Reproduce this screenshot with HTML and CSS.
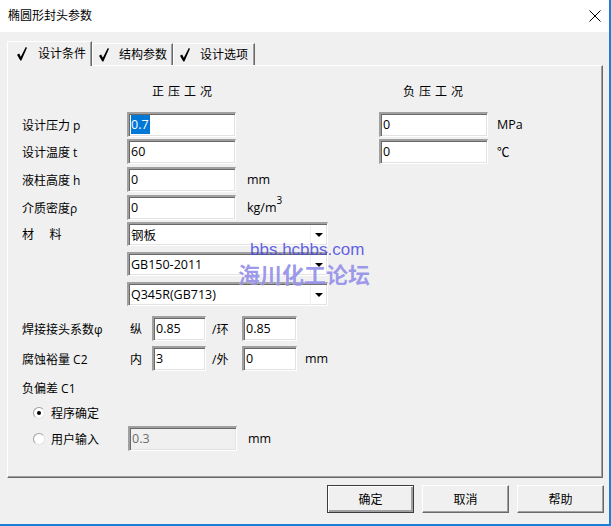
FILE: index.html
```html
<!DOCTYPE html>
<html lang="zh-CN">
<head>
  <meta charset="UTF-8">
  <title>椭圆形封头参数</title>
  <link rel="stylesheet" href="styles.css">
</head>
<body>
  <div class="window">
    <div class="titlebar">
      <span class="title">椭圆形封头参数</span>
      <svg class="close" width="12" height="12" viewBox="0 0 12 12"><path d="M0.5 0.5 L11.5 11.5 M11.5 0.5 L0.5 11.5" stroke="#000" stroke-width="1" fill="none"/></svg>
    </div>

    <div class="tabs">
      <div class="tab tab-1 active">
        <svg class="check" width="10" height="14" viewBox="0 0 10 14"><path d="M0 7.8 L2.2 6.4 L3.8 9.8 L8.8 0 L10 0.7 L4.4 13.6 L3.3 13.6 Z" fill="#000"/></svg>
        <span>设计条件</span>
      </div>
      <div class="tab tab-2">
        <svg class="check" width="10" height="14" viewBox="0 0 10 14"><path d="M0 7.8 L2.2 6.4 L3.8 9.8 L8.8 0 L10 0.7 L4.4 13.6 L3.3 13.6 Z" fill="#000"/></svg>
        <span>结构参数</span>
      </div>
      <div class="tab tab-3">
        <svg class="check" width="10" height="14" viewBox="0 0 10 14"><path d="M0 7.8 L2.2 6.4 L3.8 9.8 L8.8 0 L10 0.7 L4.4 13.6 L3.3 13.6 Z" fill="#000"/></svg>
        <span>设计选项</span>
      </div>
    </div>

    <div class="panel">
      <div class="row head">
        <span class="head-pos">正压工况</span>
        <span class="head-neg">负压工况</span>
      </div>

      <div class="row r1">
        <span class="label">设计压力 p</span>
        <div class="field"><span class="sel">0.7</span></div>
        <div class="field field-right">0</div>
        <span class="unit-right">MPa</span>
      </div>
      <div class="row r2">
        <span class="label">设计温度 t</span>
        <div class="field">60</div>
        <div class="field field-right">0</div>
        <span class="unit-right">℃</span>
      </div>
      <div class="row r3">
        <span class="label">液柱高度 h</span>
        <div class="field">0</div>
        <span class="unit">mm</span>
      </div>
      <div class="row r3">
        <span class="label">介质密度ρ</span>
        <div class="field">0</div>
        <span class="unit">kg/m<sup>3</sup></span>
      </div>

      <div class="row combo-row c1">
        <span class="label">材&nbsp;&nbsp;&nbsp;&nbsp;&nbsp;料</span>
        <div class="combo"><span class="combo-text">钢板</span><span class="drop"></span></div>
      </div>
      <div class="row combo-row c2">
        <span class="label"></span>
        <div class="combo"><span class="combo-text">GB150-2011</span><span class="drop"></span></div>
      </div>
      <div class="row combo-row c2">
        <span class="label"></span>
        <div class="combo"><span class="combo-text">Q345R(GB713)</span><span class="drop"></span></div>
      </div>

      <div class="row w1">
        <span class="label-w">焊接接头系数φ</span>
        <span class="pre">纵</span>
        <div class="field small">0.85</div>
        <span class="mid">/环</span>
        <div class="field small2">0.85</div>
      </div>
      <div class="row w2">
        <span class="label-w">腐蚀裕量 C2</span>
        <span class="pre">内</span>
        <div class="field small">3</div>
        <span class="mid">/外</span>
        <div class="field small2">0</div>
        <span class="unit-w">mm</span>
      </div>

      <div class="row text-row neg">负偏差 C1</div>
      <div class="row text-row opt1">
        <span class="radio checked"></span>
        <span class="radio-label">程序确定</span>
      </div>
      <div class="row opt2">
        <span class="radio"></span>
        <span class="radio-label wide">用户输入</span>
        <div class="field disabled">0.3</div>
        <span class="unit">mm</span>
      </div>
    </div>

    <div class="buttons">
      <div class="btn default">确定</div>
      <div class="btn">取消</div>
      <div class="btn">帮助</div>
    </div>

    <div class="watermark">
      <div class="wm-url">bbs.hcbbs.com</div>
      <div class="wm-name">海川化工论坛</div>
    </div>
  </div>
</body>
</html>
```

FILE: styles.css
```css
* {
  margin: 0;
  padding: 0;
  box-sizing: border-box;
}
body {
  background: #f0f0f0;
  font-family: 'Open Sans', 'Noto Sans CJK SC', sans-serif;
  font-size: 12px;
  color: #000;
  overflow: hidden;
}
.window {
  position: relative;
  width: 611px;
  height: 526px;
  background: #f0f0f0;
  border-right: 2px solid #1a7fd6;
  border-bottom: 2px solid #1a7fd6;
}
.titlebar {
  height: 32px;
  background: #fff;
  display: flex;
  align-items: center;
  justify-content: space-between;
  padding: 0 8px 0 8px;
}
.title {
  line-height: 16px;
}
.close {
  display: block;
}

/* tabs */
.tabs {
  margin-top: 9px;
  height: 24px;
  padding-left: 7px;
  display: flex;
  align-items: flex-end;
}
.tab {
  height: 22px;
  display: flex;
  align-items: center;
  background: #f0f0f0;
  border-top: 1px solid #fff;
  border-left: 1px solid #fff;
  border-right: 1px solid #696969;
  box-shadow: inset -1px 0 0 #a0a0a0;
  padding-left: 6px;
  line-height: 14px;
}
.tab .check {
  display: block;
  margin-right: 10px;
  flex-shrink: 0;
}
.tab-1 { width: 85px; }
.tab-2 { width: 81px; }
.tab-3 { width: 82px; }
.tab.active {
  height: 25px;
  margin-bottom: -1px;
  position: relative;
  z-index: 1;
  padding-left: 9px;
}
.tab.active .check {
  margin-right: 11px;
}

/* panel */
.panel {
  margin-left: 7px;
  width: 596px;
  height: 413px;
  border-top: 1px solid #fff;
  border-left: 1px solid #fff;
  border-right: 1px solid #696969;
  border-bottom: 1px solid #696969;
  box-shadow: inset -1px -1px 0 #a0a0a0;
  padding-left: 14px;
}
.row {
  display: flex;
  align-items: center;
  height: 25px;
}
.head {
  margin-top: 16px;
  height: 18px;
  letter-spacing: 4px;
}
.head-pos {
  margin-left: 130px;
  width: 64px;
}
.head-neg {
  margin-left: 187px;
}
.r1 { margin-top: 12px; }
.r2 { margin-top: 2px; }
.r3 { margin-top: 3px; }
.label {
  width: 105px;
  flex-shrink: 0;
}
.field {
  width: 109px;
  height: 25px;
  background: #fff;
  border-style: solid;
  border-width: 2px 1px 1px 2px;
  border-color: #a0a0a0 #fff #fff #a0a0a0;
  box-shadow: inset 1px 1px 0 #696969, inset -1px -1px 0 #e3e3e3;
  padding: 1px 0 0 2px;
  line-height: 19px;
  font-size: 12.5px;
  flex-shrink: 0;
}
.sel {
  background: #0078d7;
  color: #fff;
  display: inline-block;
  padding-right: 1px;
}
.field-right {
  margin-left: 143px;
}
.unit-right {
  margin-left: 9px;
  font-size: 12.5px;
}
.unit {
  margin-left: 11px;
  font-size: 12.5px;
}
.unit sup {
  font-size: 10px;
  vertical-align: 8px;
  line-height: 0;
}

/* combo boxes */
.combo-row {
  height: 24px;
}
.c1 { margin-top: 2px; }
.c2 { margin-top: 6px; }
.combo {
  width: 201px;
  height: 24px;
  background: #fff;
  display: flex;
  align-items: center;
  border-style: solid;
  border-width: 2px 1px 1px 2px;
  border-color: #a0a0a0 #fff #fff #a0a0a0;
  box-shadow: inset 1px 1px 0 #696969, inset -1px -1px 0 #e3e3e3;
}
.combo-text {
  flex: 1;
  padding-left: 2px;
  font-size: 12.5px;
}
.drop {
  width: 16px;
  height: 20px;
  margin-right: 1px;
  border-left: 1px solid #f0f0f0;
  display: flex;
  align-items: center;
  justify-content: center;
}
.drop::before {
  content: '';
  border-left: 4px solid transparent;
  border-right: 4px solid transparent;
  border-top: 4px solid #000;
}

/* welding / corrosion */
.w1 { margin-top: 10px; }
.w2 { margin-top: 5px; }
.label-w {
  width: 108px;
  flex-shrink: 0;
}
.pre {
  width: 22px;
}
.field.small { width: 54px; }
.field.small2 { width: 55px; }
.mid {
  margin-left: 6px;
  width: 30px;
}
.unit-w {
  margin-left: 8px;
  font-size: 12.5px;
}

.text-row {
  height: 18px;
}
.neg { margin-top: 8px; }
.opt1 { margin-top: 7px; }
.opt2 { margin-top: 4px; }
.radio {
  width: 12px;
  height: 12px;
  margin-left: 11px;
  border-radius: 50%;
  background: #fff;
  border: 1px solid;
  border-color: #a0a0a0 #e3e3e3 #e3e3e3 #a0a0a0;
  display: flex;
  align-items: center;
  justify-content: center;
  flex-shrink: 0;
}
.radio.checked::before {
  content: '';
  width: 4px;
  height: 4px;
  border-radius: 50%;
  background: #000;
}
.radio-label {
  margin-left: 6px;
}
.radio-label.wide {
  width: 77px;
}
.field.disabled {
  background: #f0f0f0;
  color: #6d6d6d;
}

/* buttons */
.buttons {
  margin-top: 7px;
  display: flex;
  justify-content: flex-end;
  gap: 8px;
  padding-right: 5px;
}
.btn {
  width: 87px;
  height: 28px;
  display: flex;
  align-items: center;
  justify-content: center;
  background: #f0f0f0;
  border-style: solid;
  border-width: 1px;
  border-color: #fff #696969 #696969 #fff;
  box-shadow: inset -1px -1px 0 #a0a0a0;
}
.btn.default {
  border-color: #3c3c3c;
  box-shadow: inset 1px 1px 0 #fff, inset -2px -2px 0 #a0a0a0;
}

/* forum watermark over the form */
.watermark {
  position: absolute;
  left: 238px;
  top: 240px;
  pointer-events: none;
}
.wm-url {
  margin-left: 12px;
  font-family: 'Liberation Sans', sans-serif;
  font-size: 17px;
  line-height: 20px;
  color: rgba(70, 70, 225, 0.85);
}
.wm-name {
  font-family: 'Noto Sans CJK SC', sans-serif;
  font-weight: bold;
  font-size: 22px;
  line-height: 26px;
  color: rgba(120, 115, 225, 0.72);
  text-shadow: 0 0 1px rgba(255, 255, 255, 0.8);
}
```
